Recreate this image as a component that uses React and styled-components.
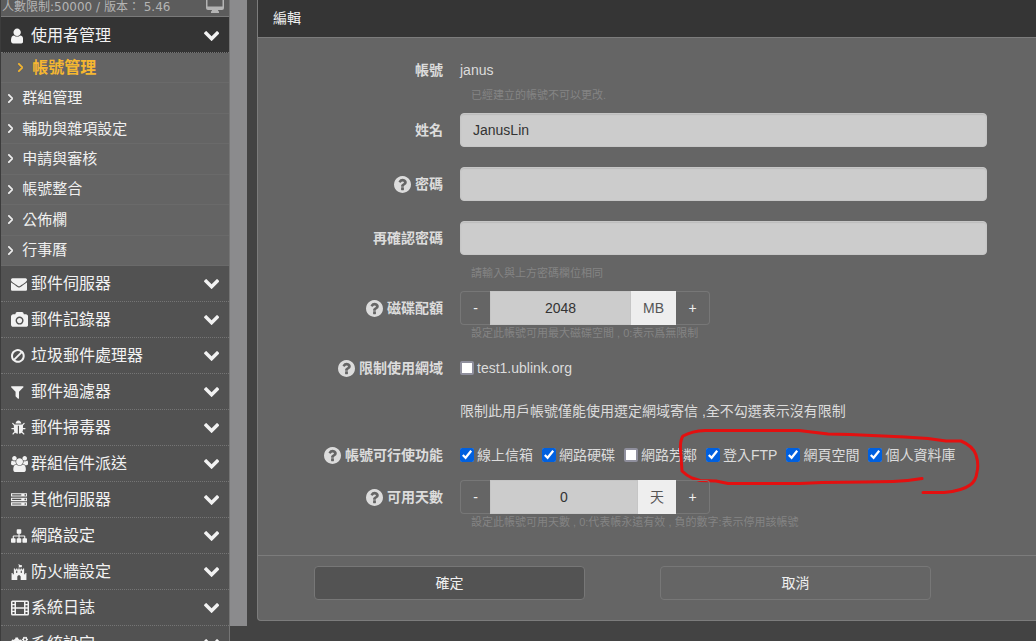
import React from 'react';
import styled, { createGlobalStyle, css } from 'styled-components';
import { FaFortAwesome, FaCogs } from 'react-icons/fa';

const GlobalStyle = createGlobalStyle`
  *, *::before, *::after { box-sizing: border-box; }
  body {
    margin: 0;
    background: #434343;
    color: #dcdcdc;
    font: 14px/20px "Liberation Sans", "Noto Sans CJK TC", sans-serif;
  }
  button, input { font: inherit; color: inherit; }
`;

const Shell = styled.div`
  display: flex;
  height: 100vh;
  overflow: hidden;
`;

/* ---------- icons ---------- */

const PATHS = {
  user: ['256 64 1280 1664', 'M1536 1399q0 109-62.5 187t-150.5 78h-854q-88 0-150.5-78t-62.5-187q0-85 8.5-160.5t31.5-152 58.5-131 94-89 134.5-34.5q131 128 313 128t313-128q76 0 134.5 34.5t94 89 58.5 131 31.5 152 8.5 160.5zm-256-887q0 159-112.5 271.5t-271.5 112.5-271.5-112.5-112.5-271.5 112.5-271.5 271.5-112.5 271.5 112.5 112.5 271.5z'],
  envelope: ['0 0 1792 1792', 'M1792 710v794q0 66-47 113t-113 47h-1472q-66 0-113-47t-47-113v-794q44 49 101 87 362 246 497 345 57 42 92.5 65.5t94.5 48 110 24.5h2q51 0 110-24.5t94.5-48 92.5-65.5q170-123 498-345 57-39 100-87zm0-294q0 79-49 151t-122 123q-376 261-468 325-10 7-42.5 31t-54 38.5-52 32.5-57.5 27-50 9h-2q-23 0-50-9t-57.5-27-52-32.5-54-38.5-42.5-31q-91-64-262-182.5t-205-142.5q-62-42-117-115.5t-55-136.5q0-78 41.5-130t118.5-52h1472q65 0 112.5 47t47.5 113z'],
  camera: ['-64 0 1920 1792', 'M896 672q119 0 203.5 84.5t84.5 203.5-84.5 203.5-203.5 84.5-203.5-84.5-84.5-203.5 84.5-203.5 203.5-84.5zm704-416q106 0 181 75t75 181v896q0 106-75 181t-181 75h-1408q-106 0-181-75t-75-181v-896q0-106 75-181t181-75h224l51-136q19-49 69.5-84.5t103.5-35.5h512q53 0 103.5 35.5t69.5 84.5l51 136h224zm-704 1152q185 0 316.5-131.5t131.5-316.5-131.5-316.5-316.5-131.5-316.5 131.5-131.5 316.5 131.5 316.5 316.5 131.5z'],
  ban: ['128 0 1536 1792', 'M1440 893q0-161-87-295l-754 753q137 89 297 89 111 0 211.5-43.5t173.5-116.5 116-174.5 43-212.5zm-999 299l755-754q-135-91-300-91-148 0-273 73t-198 199-73 274q0 162 89 299zm1223-299q0 157-61 300t-163.5 246-245 164-298.5 61-298.5-61-245-164-163.5-246-61-300 61-299.5 163.5-245.5 245-164 298.5-61 298.5 61 245 164 163.5 245.5 61 299.5z'],
  filter: ['192 0 1408 1792', 'M1595 295q17 41-14 70l-493 493v742q0 42-39 59-13 5-25 5-27 0-45-19l-256-256q-19-19-19-45v-486l-493-493q-31-29-14-70 17-39 59-39h1280q42 0 59 39z'],
  bug: ['64 0 1664 1792', 'M1696 960q0 26-19 45t-45 19h-224q0 171-67 290l208 209q19 19 19 45t-19 45q-18 19-45 19t-45-19l-198-197q-5 5-15 13t-42 28.5-65 36.5-82 29-97 13v-896h-128v896q-51 0-101.5-13.5t-87-33-66-39-43.5-32.5l-15-14-183 207q-20 21-48 21-24 0-43-16-19-18-20.5-44.5t15.5-46.5l202-227q-58-114-58-274h-224q-26 0-45-19t-19-45 19-45 45-19h224v-294l-173-173q-19-19-19-45t19-45 45-19 45 19l173 173h844l173-173q19-19 45-19t45 19 19 45-19 45l-173 173v294h224q26 0 45 19t19 45zm-480-576h-640q0-133 93.5-226.5t226.5-93.5 226.5 93.5 93.5 226.5z'],
  users: ['-64 0 1920 1792', 'M529 896q-162 5-265 128h-134q-82 0-138-40.5t-56-118.5q0-353 124-353 6 0 43.5 21t97.5 42.5 119 21.5q67 0 133-23-5 37-5 66 0 139 81 256zm1071 637q0 120-73 189.5t-194 69.5h-874q-121 0-194-69.5t-73-189.5q0-53 3.5-103.5t14-109 26.5-108.5 43-97.5 62-81 85.5-53.5 111.5-20q10 0 43 21.5t73 48 107 48 135 21.5 135-21.5 107-48 73-48 43-21.5q61 0 111.5 20t85.5 53.5 62 81 43 97.5 26.5 108.5 14 109 3.5 103.5zm-1024-1277q0 106-75 181t-181 75-181-75-75-181 75-181 181-75 181 75 75 181zm704 384q0 159-112.5 271.5t-271.5 112.5-271.5-112.5-112.5-271.5 112.5-271.5 271.5-112.5 271.5 112.5 112.5 271.5zm576 225q0 78-56 118.5t-138 40.5h-134q-103-123-265-128 81-117 81-256 0-29-5-66 66 23 133 23 59 0 119-21.5t97.5-42.5 43.5-21q124 0 124 353zm-128-609q0 106-75 181t-181 75-181-75-75-181 75-181 181-75 181 75 75 181z'],
  server: ['0 0 1792 1792', 'M128 1408h1024v-128h-1024v128zm0-512h1024v-128h-1024v128zm1568 448q0-40-28-68t-68-28-68 28-28 68 28 68 68 28 68-28 28-68zm-1568-960h1024v-128h-1024v128zm1568 448q0-40-28-68t-68-28-68 28-28 68 28 68 68 28 68-28 28-68zm0-512q0-40-28-68t-68-28-68 28-28 68 28 68 68 28 68-28 28-68zm96 832v384h-1792v-384h1792zm0-512v384h-1792v-384h1792zm0-512v384h-1792v-384h1792z'],
  sitemap: ['0 0 1792 1792', 'M1792 1248v320q0 40-28 68t-68 28h-320q-40 0-68-28t-28-68v-320q0-40 28-68t68-28h96v-192h-512v192h96q40 0 68 28t28 68v320q0 40-28 68t-68 28h-320q-40 0-68-28t-28-68v-320q0-40 28-68t68-28h96v-192h-512v192h96q40 0 68 28t28 68v320q0 40-28 68t-68 28h-320q-40 0-68-28t-28-68v-320q0-40 28-68t68-28h96v-192q0-52 38-90t90-38h512v-192h-96q-40 0-68-28t-28-68v-320q0-40 28-68t68-28h320q40 0 68 28t28 68v320q0 40-28 68t-68 28h-96v192h512q52 0 90 38t38 90v192h96q40 0 68 28t28 68z'],
  film: ['0 0 18 16', 'M1.500 0.500h15q1.500 0 1.500 1.500v12q0 1.500-1.500 1.500h-15q-1.500 0-1.500-1.500v-12q0-1.500 1.500-1.500zM1.500 2v2h2v-2zM1.500 5.300v2h2v-2zM1.500 8.700v2h2v-2zM1.500 12v2h2v-2zM14.500 2v2h2v-2zM14.500 5.300v2h2v-2zM14.500 8.700v2h2v-2zM14.500 12v2h2v-2zM5 2v5.300h8v-5.300zM5 8.700v5.300h8v-5.300z'],
  chevron: ['90 520 1612 1060', 'M1683 808l-742 741q-19 19-45 19t-45-19l-742-741q-19-19-19-45.500t19-45.500l166-165q19-19 45-19t45 19l531 531 531-531q19-19 45-19t45 19l166 165q19 19 19 45.500t-19 45.500z'],
  angle: ['589 460 582 1000', 'M1171 960q0 13-10 23l-466 466q-10 10-23 10t-23-10l-50-50q-10-10-10-23t10-23l393-393-393-393q-10-10-10-23t10-23l50-50q10-10 23-10t23 10l466 466q10 10 10 23z'],
  question: ['128 128 1536 1536', 'M1024 1376v-192q0-14-9-23t-23-9h-192q-14 0-23 9t-9 23v192q0 14 9 23t23 9h192q14 0 23-9t9-23zm256-672q0-88-55.500-163t-138.500-116-170-41q-243 0-371 213-15 24 8 42l132 100q7 6 19 6 16 0 25-12 53-68 86-92 34-24 86-24 48 0 85.500 26t37.500 59q0 38-20 61t-68 45q-63 28-115.500 86.500t-52.500 125.500v36q0 14 9 23t23 9h192q14 0 23-9t9-23q0-19 21.500-49.500t54.500-49.500q32-18 49-28.500t46-35 44.500-48 28-60.500 12.500-81zm384 192q0 209-103 385.500t-279.500 279.500-385.500 103-385.500-103-279.500-279.500-103-385.500 103-385.500 279.500-279.500 385.500-103 385.500 103 279.500 279.500 103 385.500z'],
  desktop: ['0 0 18 17', 'M2 0h14q2 0 2 2v10q0 2-2 2h-4q0 1 1 1.500v1.500h-8v-1.500q1-.500 1-1.500h-4q-2 0-2-2v-10q0-2 2-2zM1.500 2v8.500h15v-8.500z'],
};

const Svg = styled.svg`
  display: block;
  flex: none;
  height: ${(p) => p.$h}px;
  fill: currentColor;
  fill-rule: ${(p) => (p.$evenodd ? 'evenodd' : 'nonzero')};
  ${(p) => p.$bold && 'stroke: currentColor; stroke-width: 70;'}
`;

function Icon({ name, size = 16, bold = false }) {
  const [box, d] = PATHS[name];
  return (
    <Svg viewBox={box} $h={size} $bold={bold} $evenodd={name === 'film' || name === 'desktop'} aria-hidden="true">
      <path d={d} />
    </Svg>
  );
}

/* ---------- sidebar ---------- */

const Sidebar = styled.nav`
  flex: none;
  width: 230px;
  background: #525252;
  border-left: 1px solid #3c3c3c;
  border-right: 1px solid #757575;
  color: #f2f2f2;
`;

const VersionBar = styled.div`
  display: flex;
  justify-content: space-between;
  align-items: flex-end;
  height: 17px;
  padding: 0 5px 0 1px;
  overflow: hidden;
  background: #5c5c5c;
  border-bottom: 1px solid #7a7a7a;
  color: #b4b4b4;
  font: 12px/18px "DejaVu Sans", "Noto Sans CJK TC", sans-serif;
  svg { margin-bottom: 3px; }
`;

const Group = styled.button`
  display: flex;
  align-items: center;
  width: 100%;
  height: 36px;
  padding: ${(p) => (p.$active ? 2 : 0)}px 10px 0 10px;
  border: 0;
  border-bottom: 1px dotted #757575;
  background: ${(p) => (p.$active ? '#343434' : '#525252')};
  text-align: left;
  font-size: 16px;
  line-height: 24px;
`;

const GroupIcon = styled.span`
  flex: none;
  width: 20px;
`;

const GroupName = styled.span`
  flex: 1;
  padding-top: 1px;
`;

const SubMenu = styled.ul`
  display: grid;
  min-height: 213px;
  margin: 0;
  padding: 0;
  list-style: none;
  background: #646464;
`;

const SubLink = styled.a`
  display: flex;
  align-items: center;
  gap: 9px;
  height: 100%;
  padding-left: 7px;
  border-bottom: 1px solid #6a6a6a;
  color: #f0f0f0;
  font-size: 15px;
  text-decoration: none;
  ${(p) => p.$current && css`
    padding-left: 17px;
    color: #f5b731;
    font-size: 16px;
    font-weight: bold;
  `}
`;

const Rail = styled.div`
  flex: none;
  width: 17px;
  margin-bottom: 15px;
  background: #8b8b8d;
`;

/* ---------- edit panel ---------- */

const Main = styled.main`
  flex: 1;
  min-width: 0;
  padding-left: 10px;
`;

const Panel = styled.form`
  background: #656565;
  border: solid #7c7c7c;
  border-width: 0 0 1px 1px;
  border-bottom-left-radius: 4px;
`;

const PanelTitle = styled.h1`
  margin: 0;
  padding: 8px 15px 9px;
  background: #353535;
  border-bottom: 1px solid #7c7c7c;
  color: #f0f0f0;
  font-size: 14px;
  font-weight: normal;
  line-height: 20px;
`;

const Fields = styled.div`
  padding: 15px 49px 25px 0;
`;

const Row = styled.div`
  display: flex;
  gap: 17px;
  margin-bottom: ${(p) => p.$space}px;
  &:last-child { margin-bottom: 0; }
`;

const LabelCell = styled.div`
  display: flex;
  flex: none;
  align-items: center;
  justify-content: flex-end;
  gap: 4px;
  width: 185px;
  height: 34px;
  font-weight: bold;
`;

const Control = styled.div`
  position: relative;
  flex: 1;
  min-width: 0;
`;

const Static = styled.div`
  display: flex;
  align-items: center;
  height: 34px;
`;

const TextInput = styled.input`
  display: block;
  width: 100%;
  height: 34px;
  padding: 6px 12px;
  border: 1px solid #c6c6c6;
  border-radius: 4px;
  background: #cccccc;
  box-shadow: inset 0 1px 1px rgba(0, 0, 0, 0.08);
  color: #333333;
`;

const Hint = styled.div`
  padding-left: 11px;
  padding-top: ${(p) => (p.$spaced ? 10 : 0)}px;
  color: #848484;
  font-size: 11px;
  line-height: 16px;
`;

const Note = styled.p`
  margin: 0;
  padding: 16px 0 7px;
`;

const Spinner = styled.div`
  display: flex;
  width: 250px;
  height: 34px;
`;

const StepButton = styled.button`
  flex: none;
  width: ${(p) => (p.$plus ? 34 : 30)}px;
  padding: 0;
  border: 1px solid #777777;
  border-radius: ${(p) => (p.$plus ? '0 4px 4px 0' : '4px 0 0 4px')};
  ${(p) => (p.$plus ? 'border-left: 0;' : 'border-right: 0;')}
  background: transparent;
  color: #f0f0f0;
`;

const SpinInput = styled.input`
  flex: 1;
  min-width: 0;
  padding: 0;
  border: 1px solid #c6c6c6;
  background: #cccccc;
  color: #333333;
  text-align: center;
`;

const Unit = styled.span`
  display: flex;
  align-items: center;
  padding: 0 12px;
  background: #eeeeee;
  color: #555555;
`;

const Checks = styled.div`
  display: flex;
  align-items: center;
  gap: 9px;
  height: 34px;
`;

const Check = styled.label`
  display: flex;
  align-items: center;
  gap: 3px;
  white-space: nowrap;
`;

const Box = styled.input`
  width: 14px;
  height: 14px;
  margin: 0;
  accent-color: #0060df;
  &:not(:checked) {
    appearance: none;
    border: 2px solid #8f8f9d;
    border-radius: 2px;
    background: #ffffff;
  }
`;

const Scribble = styled.svg`
  position: absolute;
  top: -12px;
  left: 216px;
  width: 308px;
  height: 70px;
  fill: none;
  stroke: #e31010;
  stroke-width: 3;
  stroke-linecap: round;
  stroke-linejoin: round;
  pointer-events: none;
`;

const Footer = styled.div`
  display: grid;
  grid-template-columns: 1fr 1fr;
  gap: 75px;
  padding: 10px 105px 20px 56px;
  border-top: 1px solid #7c7c7c;
`;

const ActionButton = styled.button`
  height: 34px;
  border: 1px solid #777777;
  border-radius: 4px;
  background: ${(p) => (p.$primary ? '#535353' : 'transparent')};
  color: #f0f0f0;
`;

const SUB_ITEMS = ['帳號管理', '群組管理', '輔助與雜項設定', '申請與審核', '帳號整合', '公佈欄', '行事曆'];

const GROUPS = [
  ['郵件伺服器', <Icon name="envelope" />],
  ['郵件記錄器', <Icon name="camera" />],
  ['垃圾郵件處理器', <Icon name="ban" />],
  ['郵件過濾器', <Icon name="filter" />],
  ['郵件掃毒器', <Icon name="bug" />],
  ['群組信件派送', <Icon name="users" />],
  ['其他伺服器', <Icon name="server" />],
  ['網路設定', <Icon name="sitemap" />],
  ['防火牆設定', <FaFortAwesome size={16} display="block" />],
  ['系統日誌', <Icon name="film" />],
  ['系統設定', <FaCogs size={17} display="block" />],
];

const FEATURES = [
  ['線上信箱', true],
  ['網路硬碟', true],
  ['網路芳鄰', false],
  ['登入FTP', true],
  ['網頁空間', true],
  ['個人資料庫', true],
];

function MenuGroup({ name, icon, active }) {
  return (
    <Group type="button" $active={active} aria-expanded={!!active}>
      <GroupIcon>{icon}</GroupIcon>
      <GroupName>{name}</GroupName>
      <Icon name="chevron" size={10} />
    </Group>
  );
}

function Field({ label, htmlFor, help, space = 20, children }) {
  return (
    <Row $space={space}>
      <LabelCell>
        {help && <Icon name="question" size={17} />}
        {htmlFor ? <label htmlFor={htmlFor}>{label}</label> : <span>{label}</span>}
      </LabelCell>
      <Control>{children}</Control>
    </Row>
  );
}

function NumberSpinner({ id, value, unit }) {
  return (
    <Spinner>
      <StepButton type="button">-</StepButton>
      <SpinInput id={id} type="text" defaultValue={value} />
      <Unit>{unit}</Unit>
      <StepButton type="button" $plus>+</StepButton>
    </Spinner>
  );
}

export default function App() {
  return (
    <>
      <GlobalStyle />
      <Shell>
        <Sidebar>
          <VersionBar>
            <span>人數限制:50000 / 版本： 5.46</span>
            <Icon name="desktop" size={17} />
          </VersionBar>
          <MenuGroup name="使用者管理" icon={<Icon name="user" />} active />
          <SubMenu>
            {SUB_ITEMS.map((item, i) => (
              <li key={item}>
                <SubLink href="#" $current={i === 0}>
                  <Icon name="angle" size={9} bold />
                  {item}
                </SubLink>
              </li>
            ))}
          </SubMenu>
          {GROUPS.map(([name, icon]) => (
            <MenuGroup key={name} name={name} icon={icon} />
          ))}
        </Sidebar>
        <Rail />
        <Main>
          <Panel onSubmit={(e) => e.preventDefault()}>
            <PanelTitle>編輯</PanelTitle>
            <Fields>
              <Field label="帳號" space={10}>
                <Static>janus</Static>
                <Hint>已經建立的帳號不可以更改.</Hint>
              </Field>
              <Field label="姓名" htmlFor="name">
                <TextInput id="name" type="text" defaultValue="JanusLin" />
              </Field>
              <Field label="密碼" htmlFor="password" help>
                <TextInput id="password" type="password" />
              </Field>
              <Field label="再確認密碼" htmlFor="confirm" space={10}>
                <TextInput id="confirm" type="password" />
                <Hint $spaced>請輸入與上方密碼欄位相同</Hint>
              </Field>
              <Field label="磁碟配額" htmlFor="quota" help space={10}>
                <NumberSpinner id="quota" value="2048" unit="MB" />
                <Hint>設定此帳號可用最大磁碟空間 , 0:表示爲無限制</Hint>
              </Field>
              <Field label="限制使用網域" help space={10}>
                <Checks>
                  <Check>
                    <Box type="checkbox" />
                    test1.ublink.org
                  </Check>
                </Checks>
                <Note>限制此用戶帳號僅能使用選定網域寄信 ,全不勾選表示沒有限制</Note>
              </Field>
              <Field label="帳號可行使功能" help space={8}>
                <Checks>
                  {FEATURES.map(([name, on]) => (
                    <Check key={name}>
                      <Box type="checkbox" defaultChecked={on} />
                      {name}
                    </Check>
                  ))}
                </Checks>
                <Scribble viewBox="676 426 308 70" aria-hidden="true">
                  <path d="M922 478.500Q908 481 893 481.500L865 482L822 482.500L800 483.500H728L716 481L700 480.500L692 478Q686 475 682 471L680.500 450Q680 440 683 436Q692 431 705 430.500H799L828 434L850 434.500L905 437L928 438.500L946 441H961Q973 446 976 455Q979 464 977 472Q976 481 970 485Q962 491 944 492.500H923" />
                </Scribble>
              </Field>
              <Field label="可用天數" htmlFor="days" help>
                <NumberSpinner id="days" value="0" unit="天" />
                <Hint>設定此帳號可用天數 , 0:代表帳永遠有效 , 負的數字:表示停用該帳號</Hint>
              </Field>
            </Fields>
            <Footer>
              <ActionButton type="submit" $primary>確定</ActionButton>
              <ActionButton type="button">取消</ActionButton>
            </Footer>
          </Panel>
        </Main>
      </Shell>
    </>
  );
}
